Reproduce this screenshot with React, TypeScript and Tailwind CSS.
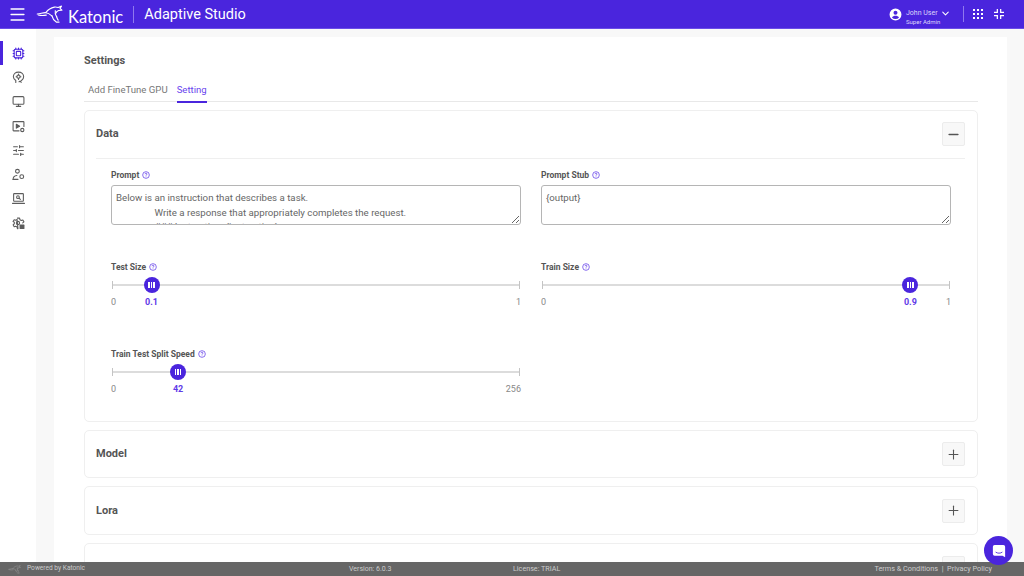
import React from 'react';
import { ChevronDown, Cpu, Minus, Monitor, Plus, SlidersHorizontal, Menu } from 'lucide-react';

const KangarooMark = ({ className }: { className: string }) => (
    <svg className={className} viewBox="0 0 32 20" fill="none" stroke="currentColor" strokeWidth={1.200} strokeLinecap="round" strokeLinejoin="round">
        <path d="M1 9.500c4-.4 6-1.600 9-1.400 3 .2 4.500 1.600 6.500 3.400" />
        <path d="M2 10.500c3 .8 6 .6 8.500.2" />
        <path d="M10 8c2-2.600 5-5 9-5.800 1.500-.3 3 .1 4 .4l3.500-1.400-1.500 2.400 2 1.800-3.500.4c-1.500.6-2.500 1.500-3 3" />
        <path d="M20 6c-.6 2.500.2 4.500 1.500 6.500" />
        <path d="M16.500 11.500c.6 2.500 2 5 4.500 6.500h3" />
        <path d="M21.500 12.500c.3 1.500.8 2.500 1.500 3.500" />
    </svg>
);

const HelpDot = () => (
    <svg className="ml-[3px] h-[8px] w-[8px] text-[#5f3ae8]" viewBox="0 0 12 12" fill="none" stroke="currentColor" strokeWidth={1.100}>
        <circle cx="6" cy="6" r="5" />
        <path d="M4.500 4.800c0-1 .7-1.500 1.500-1.500s1.500.6 1.500 1.300c0 1.100-1.500 1.200-1.500 2.400" />
        <path d="M6 8.300v.8" />
    </svg>
);

const navIcon = 'h-[13px] w-[13px]';

const HeadIcon = () => (
    <svg className={navIcon} viewBox="0 0 24 24" fill="none" stroke="currentColor" strokeWidth={2} strokeLinecap="round" strokeLinejoin="round">
        <path d="M7 21v-3.500C4.500 15.500 2.500 13.500 2.500 10.500 2.500 5.500 6.500 2 12 2s9.500 3.500 9.500 8.500c0 3-1.800 5.500-4 7" />
        <circle cx="12" cy="10.500" r="3" />
        <path d="M12 5.500v2M12 13.500v2M7.500 10.500h1.500M15 10.500h1.500" />
        <path d="M17 21l-1.500-2.500L13 20" />
    </svg>
);

const PlayGearIcon = () => (
    <svg className={navIcon} viewBox="0 0 24 24" fill="none" stroke="currentColor" strokeWidth={2} strokeLinecap="round" strokeLinejoin="round">
        <path d="M13 20H3a1 1 0 0 1-1-1V4a1 1 0 0 1 1-1h18a1 1 0 0 1 1 1v8" />
        <path d="M8 8l6 3.500L8 15z" fill="currentColor" />
        <circle cx="19" cy="18.500" r="3" />
    </svg>
);

const UserGearIcon = () => (
    <svg className={navIcon} viewBox="0 0 24 24" fill="none" stroke="currentColor" strokeWidth={2} strokeLinecap="round" strokeLinejoin="round">
        <circle cx="10" cy="6" r="3.500" />
        <path d="M2 21c0-4 3-6.500 7-7" />
        <path d="M2 21h9" />
        <circle cx="18" cy="16" r="3.500" />
    </svg>
);

const LaptopSearchIcon = () => (
    <svg className={navIcon} viewBox="0 0 24 24" fill="none" stroke="currentColor" strokeWidth={2} strokeLinecap="round" strokeLinejoin="round">
        <rect x="3" y="3" width="18" height="14" rx="1" />
        <path d="M1 21h22" />
        <circle cx="11" cy="9.500" r="2.500" />
        <path d="M13 11.500l2.500 2" />
    </svg>
);

const GearLockIcon = () => (
    <svg className={navIcon} viewBox="0 0 24 24" fill="none" stroke="currentColor" strokeWidth={2} strokeLinecap="round" strokeLinejoin="round">
        <path d="M10 2h4l.6 3 2.600 1.500 2.800-1 2 3.500-2.200 2M11 21.500h-1l-.6-3-2.600-1.500-2.800 1-2-3.500 2.300-2v-3L2 8.500l2-3.500 2.800 1L9.400 4.500z" />
        <circle cx="11" cy="11" r="3" />
        <rect x="14" y="14" width="9" height="8" rx="1" fill="currentColor" stroke="none" />
    </svg>
);

const FieldLabel = ({ text }: { text: string }) => (
    <div className="flex items-center text-[8.500px] leading-[12px] font-bold text-[#555]">
        {text}
        <HelpDot />
    </div>
);

const PromptField = ({ label, value }: { label: string; value: string }) => (
    <div className="w-[410px]">
        <FieldLabel text={label} />
        <textarea
            readOnly
            defaultValue={value}
            className="mt-[4px] block h-[40px] w-[410px] resize-y overflow-hidden rounded-[3px] border border-[#b5b5b5] bg-white px-[4px] py-[5px] text-[9.700px] leading-[14.500px] text-[#666] outline-none"
            style={{ fontFamily: 'Roboto, sans-serif' }}
        />
    </div>
);

interface SliderProps {
    label: string;
    min: string;
    max: string;
    value: string;
    percent: number;
}

const Slider = ({ label, min, max, value, percent }: SliderProps) => (
    <div className="w-[410px]">
        <FieldLabel text={label} />
        <div className="relative mt-[4px] ml-[1px] h-[16px] w-[408px]">
            <div className="absolute top-[7px] left-0 h-[2px] w-full bg-[#dcdcdc]" />
            <div className="absolute top-[4px] left-0 h-[8px] w-px bg-[#c4c4c4]" />
            <div className="absolute top-[4px] right-0 h-[8px] w-px bg-[#c4c4c4]" />
            <div
                className="absolute top-0 flex h-[16px] w-[16px] -translate-x-1/2 items-center justify-center gap-[1px] rounded-full bg-[#4a25dd]"
                style={{ left: `${percent}%` }}
            >
                <span className="h-[6px] w-[1.500px] bg-white" />
                <span className="h-[6px] w-[1.500px] bg-white" />
                <span className="h-[6px] w-[1.500px] bg-white" />
            </div>
        </div>
        <div className="relative mt-[3px] flex h-[12px] justify-between text-[9px] leading-[12px] text-[#888]">
            <span>{min}</span>
            <span>{max}</span>
            <span
                className="absolute top-0 -translate-x-1/2 font-bold text-[#5f3ae8]"
                style={{ left: `calc(1px + ${percent * 4.08}px)` }}
            >
                {value}
            </span>
        </div>
    </div>
);

const ToggleButton = ({ open }: { open?: boolean }) => (
    <div className="flex h-[24px] w-[23px] items-center justify-center rounded-[2px] border border-[#ececec] bg-[#f8f8f8] text-[#555]">
        {open ? <Minus size={15} strokeWidth={2.500} /> : <Plus size={15} strokeWidth={1.750} />}
    </div>
);

const CollapsedCard = ({ title, height }: { title?: string; height: string }) => (
    <div className={`mt-[8px] flex shrink-0 items-center justify-between rounded-[5px] border border-[#efefef] pr-[12px] pl-[11px] ${height}`}>
        <span className="mt-[1px] text-[11px] font-bold text-[#555]">{title}</span>
        <ToggleButton />
    </div>
);

const PROMPT_TEXT = `Below is an instruction that describes a task.
                Write a response that appropriately completes the request.
                ### Instruction: {instruction}`;

const App = () => {
    const navItems = [
        <Cpu key="cpu" size={13} strokeWidth={2} />,
        <HeadIcon key="head" />,
        <Monitor key="monitor" size={13} strokeWidth={2} />,
        <PlayGearIcon key="play" />,
        <SlidersHorizontal key="sliders" size={13} strokeWidth={2} />,
        <UserGearIcon key="user" />,
        <LaptopSearchIcon key="laptop" />,
        <GearLockIcon key="gear" />,
    ];

    return (
        <div className="relative flex h-[576px] w-[1024px] flex-col overflow-hidden bg-white font-['Roboto',sans-serif]">
            <header className="flex h-[29px] shrink-0 items-center border-b border-[#6a4ce8] bg-[#4a25dd] text-white">
                <Menu className="ml-[8px] h-[19px] w-[19px]" strokeWidth={2} />
                <KangarooMark className="ml-[9px] h-[19px] w-[31px]" />
                <span className="mt-[6px] ml-px font-['Lato',sans-serif] text-[16.500px] leading-none font-normal">Katonic</span>
                <div className="mx-[10px] h-[17px] w-px bg-[#8f78ee]" />
                <span className="mt-[2px] text-[14.500px] font-normal">Adaptive Studio</span>
                <div className="ml-auto flex items-center">
                    <svg className="h-[13px] w-[13px]" viewBox="0 0 24 24" fill="currentColor">
                        <path d="M12 1a11 11 0 1 0 0 22 11 11 0 0 0 0-22zm0 4a3.700 3.700 0 1 1 0 7.400A3.700 3.700 0 0 1 12 5zm0 15.500a8.500 8.500 0 0 1-6.500-3c1-1.900 4-3 6.500-3s5.500 1.100 6.500 3a8.500 8.500 0 0 1-6.500 3z" />
                    </svg>
                    <div className="mt-[5px] ml-[4px] w-[33px]">
                        <div className="text-[7px] leading-[10px] whitespace-nowrap text-[#ddd6fb]">John User</div>
                        <div className="text-[6px] leading-[8px] whitespace-nowrap text-[#ddd6fb]">Super Admin</div>
                    </div>
                    <ChevronDown className="-mt-[1px] ml-[1px] h-[11px] w-[11px]" strokeWidth={2.250} />
                    <div className="ml-[12px] h-[16px] w-px bg-[#8f78ee]" />
                    <div className="ml-[9px] grid w-[10px] grid-cols-3 gap-[2px]">
                        {Array.from({ length: 9 }).map((_, i) => (
                            <span key={i} className="h-[2px] w-[2px] bg-white" />
                        ))}
                    </div>
                    <svg className="mr-[20px] ml-[11px] h-[10px] w-[10px]" viewBox="0 0 12 12" fill="none" stroke="currentColor" strokeWidth={1.500}>
                        <path d="M4 0v4H0M8 0v4h4M4 12V8H0M8 12V8h4" />
                    </svg>
                </div>
            </header>

            <div className="flex min-h-0 flex-1">
                <nav className="flex w-[36px] shrink-0 flex-col bg-white pt-[12px] text-[#5c5c5c]">
                    {navItems.map((icon, i) => (
                        <div
                            key={i}
                            className={`flex h-[24.300px] items-center justify-center pl-[1px] ${i === 0 ? 'border-l-[3.500px] border-[#4a25dd] pr-[3px] text-[#4a25dd]' : ''}`}
                        >
                            {icon}
                        </div>
                    ))}
                </nav>

                <main className="flex min-w-0 flex-1 bg-[#f8f8f8] pt-[8px] pr-[17px] pl-[18px]">
                    <div className="flex min-w-0 flex-1 flex-col overflow-hidden bg-white pr-[29px] pl-[30px]">
                        <h1 className="mt-[17px] text-[11px] leading-[13px] font-bold text-[#555]">Settings</h1>

                        <div className="mt-[16px] flex h-[19px] shrink-0 gap-[9px] border-b border-[#e8e8e8] pl-[4px] text-[9.600px] leading-[14px]">
                            <span className="text-[#777]">Add FineTune GPU</span>
                            <span className="h-[20px] border-b-2 border-[#4a25dd] text-[#6a45ee]">Setting</span>
                        </div>

                        <section className="mt-[8px] shrink-0 rounded-[5px] border border-[#efefef] pr-[12px] pl-[11px]">
                            <div className="flex h-[48px] items-center justify-between border-b border-[#efefef] pb-[1px]">
                                <span className="mt-[1px] text-[11px] font-bold text-[#555]">Data</span>
                                <ToggleButton open />
                            </div>
                            <div className="h-[262px] pt-[10px] pl-[15px]">
                                <div className="flex gap-[20px]">
                                    <PromptField label="Prompt" value={PROMPT_TEXT} />
                                    <PromptField label="Prompt Stub" value="{output}" />
                                </div>
                                <div className="mt-[36px] flex gap-[20px]">
                                    <Slider label="Test Size" min="0" max="1" value="0.1" percent={9.700} />
                                    <Slider label="Train Size" min="0" max="1" value="0.9" percent={90.300} />
                                </div>
                                <div className="mt-[40px]">
                                    <Slider label="Train Test Split Speed" min="0" max="256" value="42" percent={16.200} />
                                </div>
                            </div>
                        </section>

                        <CollapsedCard title="Model" height="h-[48px]" />
                        <CollapsedCard title="Lora" height="h-[49px]" />
                        <CollapsedCard height="h-[49px]" />
                    </div>
                </main>
            </div>

            <footer className="relative z-10 flex h-[14px] shrink-0 items-center bg-[#666] text-[7px] text-[#ccc]">
                <KangarooMark className="ml-[8px] h-[9px] w-[15px] text-[#999]" />
                <span className="ml-[4px] w-[322px] text-[6.600px]">Powered by Katonic</span>
                <span className="w-[164px]">Version: 6.0.3</span>
                <span className="text-[7.200px]">License: TRIAL</span>
                <span className="mr-[32px] ml-auto text-[7.300px]">Terms &amp; Conditions &nbsp;|&nbsp; Privacy Policy</span>
            </footer>

            <div className="absolute top-[536px] left-[984px] z-20 flex h-[29px] w-[29px] items-center justify-center rounded-full bg-[#4a25dd]">
                <svg className="h-[14px] w-[14px]" viewBox="0 0 16 16">
                    <path fill="white" d="M3 1h10a2 2 0 0 1 2 2v12l-3-1.600H3a2 2 0 0 1-2-2V3a2 2 0 0 1 2-2z" />
                    <path d="M4.500 9.500c2 1.400 5 1.400 7 0" fill="none" stroke="#4a25dd" strokeWidth={1} strokeLinecap="round" />
                </svg>
            </div>
        </div>
    );
};

export default App;
